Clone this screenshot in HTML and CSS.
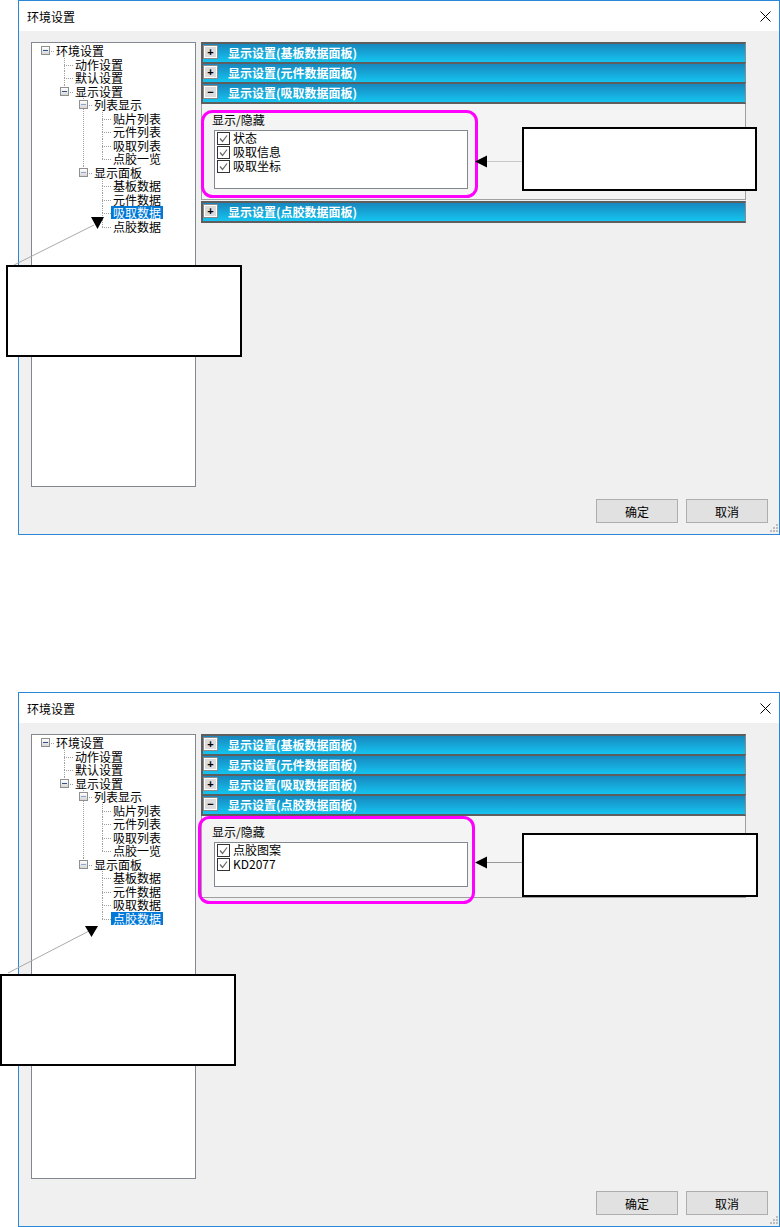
FILE: index.html
```html
<!DOCTYPE html>
<html lang="zh-CN">
<head>
    <meta charset="UTF-8">
    <meta name="viewport" content="width=device-width, initial-scale=1.0">
    <title>环境设置</title>
    <link rel="stylesheet" href="styles.css">
</head>
<body>

  <!-- first dialog: pick-up data panel -->
  <div class="dialog">
    <div class="titlebar">
      <span>环境设置</span>
      <svg class="close" width="11" height="11" viewBox="0 0 11 11"><path d="M0.5 0.5 L10.5 10.5 M10.5 0.5 L0.5 10.5" stroke="#000" stroke-width="1"/></svg>
    </div>
    <div class="dialog-body">
      <ul class="tree">
        <li>
          <div class="row"><span class="toggle"></span><span class="label">环境设置</span></div>
          <ul>
            <li><div class="row"><span class="label">动作设置</span></div></li>
            <li><div class="row"><span class="label">默认设置</span></div></li>
            <li>
              <div class="row"><span class="toggle"></span><span class="label">显示设置</span></div>
              <ul>
                <li>
                  <div class="row"><span class="toggle soft"></span><span class="label">列表显示</span></div>
                  <ul>
                    <li><div class="row"><span class="label">贴片列表</span></div></li>
                    <li><div class="row"><span class="label">元件列表</span></div></li>
                    <li><div class="row"><span class="label">吸取列表</span></div></li>
                    <li><div class="row"><span class="label">点胶一览</span></div></li>
                  </ul>
                </li>
                <li>
                  <div class="row"><span class="toggle soft"></span><span class="label">显示面板</span></div>
                  <ul>
                    <li><div class="row"><span class="label">基板数据</span></div></li>
                    <li><div class="row"><span class="label">元件数据</span></div></li>
                    <li><div class="row"><span class="label selected">吸取数据</span></div></li>
                    <li><div class="row"><span class="label">点胶数据</span></div></li>
                  </ul>
                </li>
              </ul>
            </li>
          </ul>
        </li>
      </ul>

      <div class="sections">
        <div class="sec-head"><span class="sec-btn">+</span><span class="sec-title">显示设置(基板数据面板)</span></div>
        <div class="sec-head"><span class="sec-btn">+</span><span class="sec-title">显示设置(元件数据面板)</span></div>
        <div class="sec-head open"><span class="sec-btn">−</span><span class="sec-title">显示设置(吸取数据面板)</span></div>
        <div class="sec-body">
          <div class="group-label">显示/隐藏</div>
          <div class="check-list">
            <div class="check-item"><svg class="check" width="13" height="13" viewBox="0 0 13 13"><rect x="0.5" y="0.5" width="12" height="12" fill="#fff" stroke="#333"/><path d="M3 6.5 L5.5 9.5 L10 3.5" fill="none" stroke="#666" stroke-width="1.2"/></svg><span>状态</span></div>
            <div class="check-item"><svg class="check" width="13" height="13" viewBox="0 0 13 13"><rect x="0.5" y="0.5" width="12" height="12" fill="#fff" stroke="#333"/><path d="M3 6.5 L5.5 9.5 L10 3.5" fill="none" stroke="#666" stroke-width="1.2"/></svg><span>吸取信息</span></div>
            <div class="check-item"><svg class="check" width="13" height="13" viewBox="0 0 13 13"><rect x="0.5" y="0.5" width="12" height="12" fill="#fff" stroke="#333"/><path d="M3 6.5 L5.5 9.5 L10 3.5" fill="none" stroke="#666" stroke-width="1.2"/></svg><span>吸取坐标</span></div>
          </div>
        </div>
        <div class="sec-head open after"><span class="sec-btn">+</span><span class="sec-title">显示设置(点胶数据面板)</span></div>
      </div>

      <div class="footer">
        <button class="btn">确定</button>
        <button class="btn">取消</button>
      </div>
    </div>

    <!-- annotations drawn over the dialog -->
    <svg class="notes" width="780" height="535" viewBox="0 0 780 535">
      <rect x="202.5" y="111.5" width="274" height="85" rx="10" fill="none" stroke="#ff00ff" stroke-width="3"/>
      <line x1="487" y1="161.5" x2="522" y2="161.5" stroke="#c8c8c8"/>
      <polygon points="475,161.5 487,155.5 487,167.5" fill="#000"/>
      <rect x="523" y="128" width="233" height="62" fill="#fff" stroke="#000" stroke-width="2"/>
      <line x1="14" y1="265" x2="94" y2="225" stroke="#aaa"/>
      <polygon points="91,217 104,217 97.5,229" fill="#000"/>
      <rect x="7" y="266" width="234" height="90" fill="#fff" stroke="#000" stroke-width="2"/>
      <g fill="#bdbdbd">
        <rect x="776" y="524" width="2" height="2"/>
        <rect x="773" y="527" width="2" height="2"/><rect x="776" y="527" width="2" height="2"/>
        <rect x="770" y="530" width="2" height="2"/><rect x="773" y="530" width="2" height="2"/><rect x="776" y="530" width="2" height="2"/>
      </g>
    </svg>
  </div>

  <!-- second dialog: dispensing data panel -->
  <div class="dialog second">
    <div class="titlebar">
      <span>环境设置</span>
      <svg class="close" width="11" height="11" viewBox="0 0 11 11"><path d="M0.5 0.5 L10.5 10.5 M10.5 0.5 L0.5 10.5" stroke="#000" stroke-width="1"/></svg>
    </div>
    <div class="dialog-body">
      <ul class="tree">
        <li>
          <div class="row"><span class="toggle"></span><span class="label">环境设置</span></div>
          <ul>
            <li><div class="row"><span class="label">动作设置</span></div></li>
            <li><div class="row"><span class="label">默认设置</span></div></li>
            <li>
              <div class="row"><span class="toggle"></span><span class="label">显示设置</span></div>
              <ul>
                <li>
                  <div class="row"><span class="toggle soft"></span><span class="label">列表显示</span></div>
                  <ul>
                    <li><div class="row"><span class="label">贴片列表</span></div></li>
                    <li><div class="row"><span class="label">元件列表</span></div></li>
                    <li><div class="row"><span class="label">吸取列表</span></div></li>
                    <li><div class="row"><span class="label">点胶一览</span></div></li>
                  </ul>
                </li>
                <li>
                  <div class="row"><span class="toggle soft"></span><span class="label">显示面板</span></div>
                  <ul>
                    <li><div class="row"><span class="label">基板数据</span></div></li>
                    <li><div class="row"><span class="label">元件数据</span></div></li>
                    <li><div class="row"><span class="label">吸取数据</span></div></li>
                    <li><div class="row"><span class="label selected">点胶数据</span></div></li>
                  </ul>
                </li>
              </ul>
            </li>
          </ul>
        </li>
      </ul>

      <div class="sections">
        <div class="sec-head"><span class="sec-btn">+</span><span class="sec-title">显示设置(基板数据面板)</span></div>
        <div class="sec-head"><span class="sec-btn">+</span><span class="sec-title">显示设置(元件数据面板)</span></div>
        <div class="sec-head"><span class="sec-btn">+</span><span class="sec-title">显示设置(吸取数据面板)</span></div>
        <div class="sec-head open"><span class="sec-btn">−</span><span class="sec-title">显示设置(点胶数据面板)</span></div>
        <div class="sec-body">
          <div class="group-label">显示/隐藏</div>
          <div class="check-list">
            <div class="check-item"><svg class="check" width="13" height="13" viewBox="0 0 13 13"><rect x="0.5" y="0.5" width="12" height="12" fill="#fff" stroke="#333"/><path d="M3 6.5 L5.5 9.5 L10 3.5" fill="none" stroke="#666" stroke-width="1.2"/></svg><span>点胶图案</span></div>
            <div class="check-item"><svg class="check" width="13" height="13" viewBox="0 0 13 13"><rect x="0.5" y="0.5" width="12" height="12" fill="#fff" stroke="#333"/><path d="M3 6.5 L5.5 9.5 L10 3.5" fill="none" stroke="#666" stroke-width="1.2"/></svg><span>KD2077</span></div>
          </div>
        </div>
      </div>

      <div class="footer">
        <button class="btn">确定</button>
        <button class="btn">取消</button>
      </div>
    </div>

    <svg class="notes" width="780" height="535" viewBox="0 0 780 535">
      <rect x="199.5" y="125.5" width="274" height="85" rx="10" fill="none" stroke="#ff00ff" stroke-width="3"/>
      <line x1="487" y1="170.5" x2="522" y2="170.5" stroke="#999"/>
      <polygon points="475,170.5 487,164.5 487,176.5" fill="#000"/>
      <rect x="523" y="142" width="234" height="62" fill="#fff" stroke="#000" stroke-width="2"/>
      <line x1="8" y1="281" x2="89" y2="239" stroke="#aaa"/>
      <polygon points="85,234 98,234 91.5,245" fill="#000"/>
      <rect x="1" y="283" width="234" height="90" fill="#fff" stroke="#000" stroke-width="2"/>
      <g fill="#bdbdbd">
        <rect x="776" y="524" width="2" height="2"/>
        <rect x="773" y="527" width="2" height="2"/><rect x="776" y="527" width="2" height="2"/>
        <rect x="770" y="530" width="2" height="2"/><rect x="773" y="530" width="2" height="2"/><rect x="776" y="530" width="2" height="2"/>
      </g>
    </svg>
  </div>

</body>
</html>
```

FILE: styles.css
```css
*{
  box-sizing: border-box;
}

body {
  margin: 0;
  background: #fff;
  font-family: "Noto Sans CJK SC", "Liberation Sans", sans-serif;
  font-size: 12px;
  color: #000;
}

/*window frame*/
.dialog {
  position: relative;
  width: 762px;
  height: 535px;
  margin-left: 18px;
  border: 1px solid #2b88d8;
  background: #f0f0f0;
  display: flex;
  flex-direction: column;
}

.dialog.second {
  margin-top: 157px;
}

.titlebar {
  height: 30px;
  background: #fff;
  display: flex;
  align-items: center;
  justify-content: space-between;
  padding: 0 8px;
}

.close {
  display: block;
}

/*tree + sections + buttons*/
.dialog-body {
  flex: 1;
  padding: 11px 11px 11px 12px;
  display: grid;
  grid-template-columns: 165px 545px 1fr;
  grid-template-rows: 445px auto;
  column-gap: 5px;
  row-gap: 12px;
}

/*tree view*/
.tree {
  list-style: none;
  margin: 0;
  padding: 1px 0 0 0;
  height: 445px;
  border: 1px solid #828790;
  background: #fff;
}

.tree ul {
  list-style: none;
  margin: 0;
  padding-left: 19px;
}

.tree li {
  position: relative;
}

.tree .row {
  position: relative;
  height: 13.5px;
  padding-left: 22px;
  display: flex;
  align-items: center;
}

/*horizontal connector*/
.tree .row::before {
  content: '';
  position: absolute;
  left: 13px;
  width: 9px;
  top: 7px;
  border-top: 1px dotted #a0a0a0;
}

/*vertical connector up to the row*/
.tree ul li::before {
  content: '';
  position: absolute;
  left: 13px;
  top: 0;
  height: 7px;
  border-left: 1px dotted #a0a0a0;
}

.tree ul li:not(:last-child)::after {
  content: '';
  position: absolute;
  left: 13px;
  top: 7px;
  bottom: 0;
  border-left: 1px dotted #a0a0a0;
}

.toggle {
  position: relative;
  z-index: 1;
  width: 9px;
  height: 9px;
  margin-left: -13px;
  margin-right: 4px;
  border: 1px solid #8e8f8f;
  background: linear-gradient(#fff, #d6d6d6);
}

.toggle::after {
  content: '';
  position: absolute;
  left: 1px;
  top: 3px;
  width: 5px;
  height: 1px;
  background: #32508a;
}

.toggle.soft::after {
  background: #8fa6cc;
}

.label {
  display: inline-block;
  height: 13px;
  line-height: 13px;
  padding: 0 2px;
  white-space: nowrap;
}

.label.selected {
  background: #0078d7;
  color: #fff;
}

/*collapsible sections*/
.sections {
  display: flex;
  flex-direction: column;
}

.sec-head {
  height: 20px;
  border-top: 2px solid #5e5e5e;
  border-left: 2px solid #5e5e5e;
  border-right: 1px solid #8c8c8c;
  background: linear-gradient(#1787bf, #15c4ef);
  display: flex;
  align-items: flex-start;
}

.sec-head.open {
  height: 22px;
  border-bottom: 2px solid #5e5e5e;
}

.sec-head.after {
  margin-top: 1px;
}

.sec-btn {
  width: 15px;
  height: 14px;
  margin-top: 1px;
  border: 1px solid #8a8a8a;
  box-shadow: inset 0 0 0 1px #fff;
  background: #dcdcdc;
  display: flex;
  align-items: center;
  justify-content: center;
  font: bold 11px "Liberation Sans", sans-serif;
  line-height: 1;
  color: #000;
}

.sec-title {
  margin-left: 10px;
  line-height: 17px;
  color: #fff;
  font-weight: 700;
  white-space: nowrap;
}

.sec-body {
  background: #f4f4f4;
  border: 1px solid #a0a0a0;
  border-top: 0;
  padding: 9px 10px 10px;
}

.group-label {
  height: 14px;
  line-height: 14px;
}

.check-list {
  width: 254px;
  margin: 3px 0 0 2px;
  padding: 0 0 15px 2px;
  border: 1px solid #828790;
  background: #fff;
}

.check-item {
  height: 14px;
  display: flex;
  align-items: center;
  gap: 3px;
  line-height: 14px;
}

.check {
  display: block;
  flex: none;
}

/*dialog buttons*/
.footer {
  grid-column: 1 / -1;
  display: flex;
  justify-content: flex-end;
  gap: 8px;
}

.btn {
  width: 82px;
  height: 24px;
  padding: 0;
  border: 1px solid #adadad;
  background: #e1e1e1;
  font-family: "Noto Sans CJK SC", sans-serif;
  font-size: 12px;
  color: #000;
}

/*annotation layer*/
.notes {
  position: absolute;
  left: -19px;
  top: -1px;
  overflow: visible;
  pointer-events: none;
}
```
